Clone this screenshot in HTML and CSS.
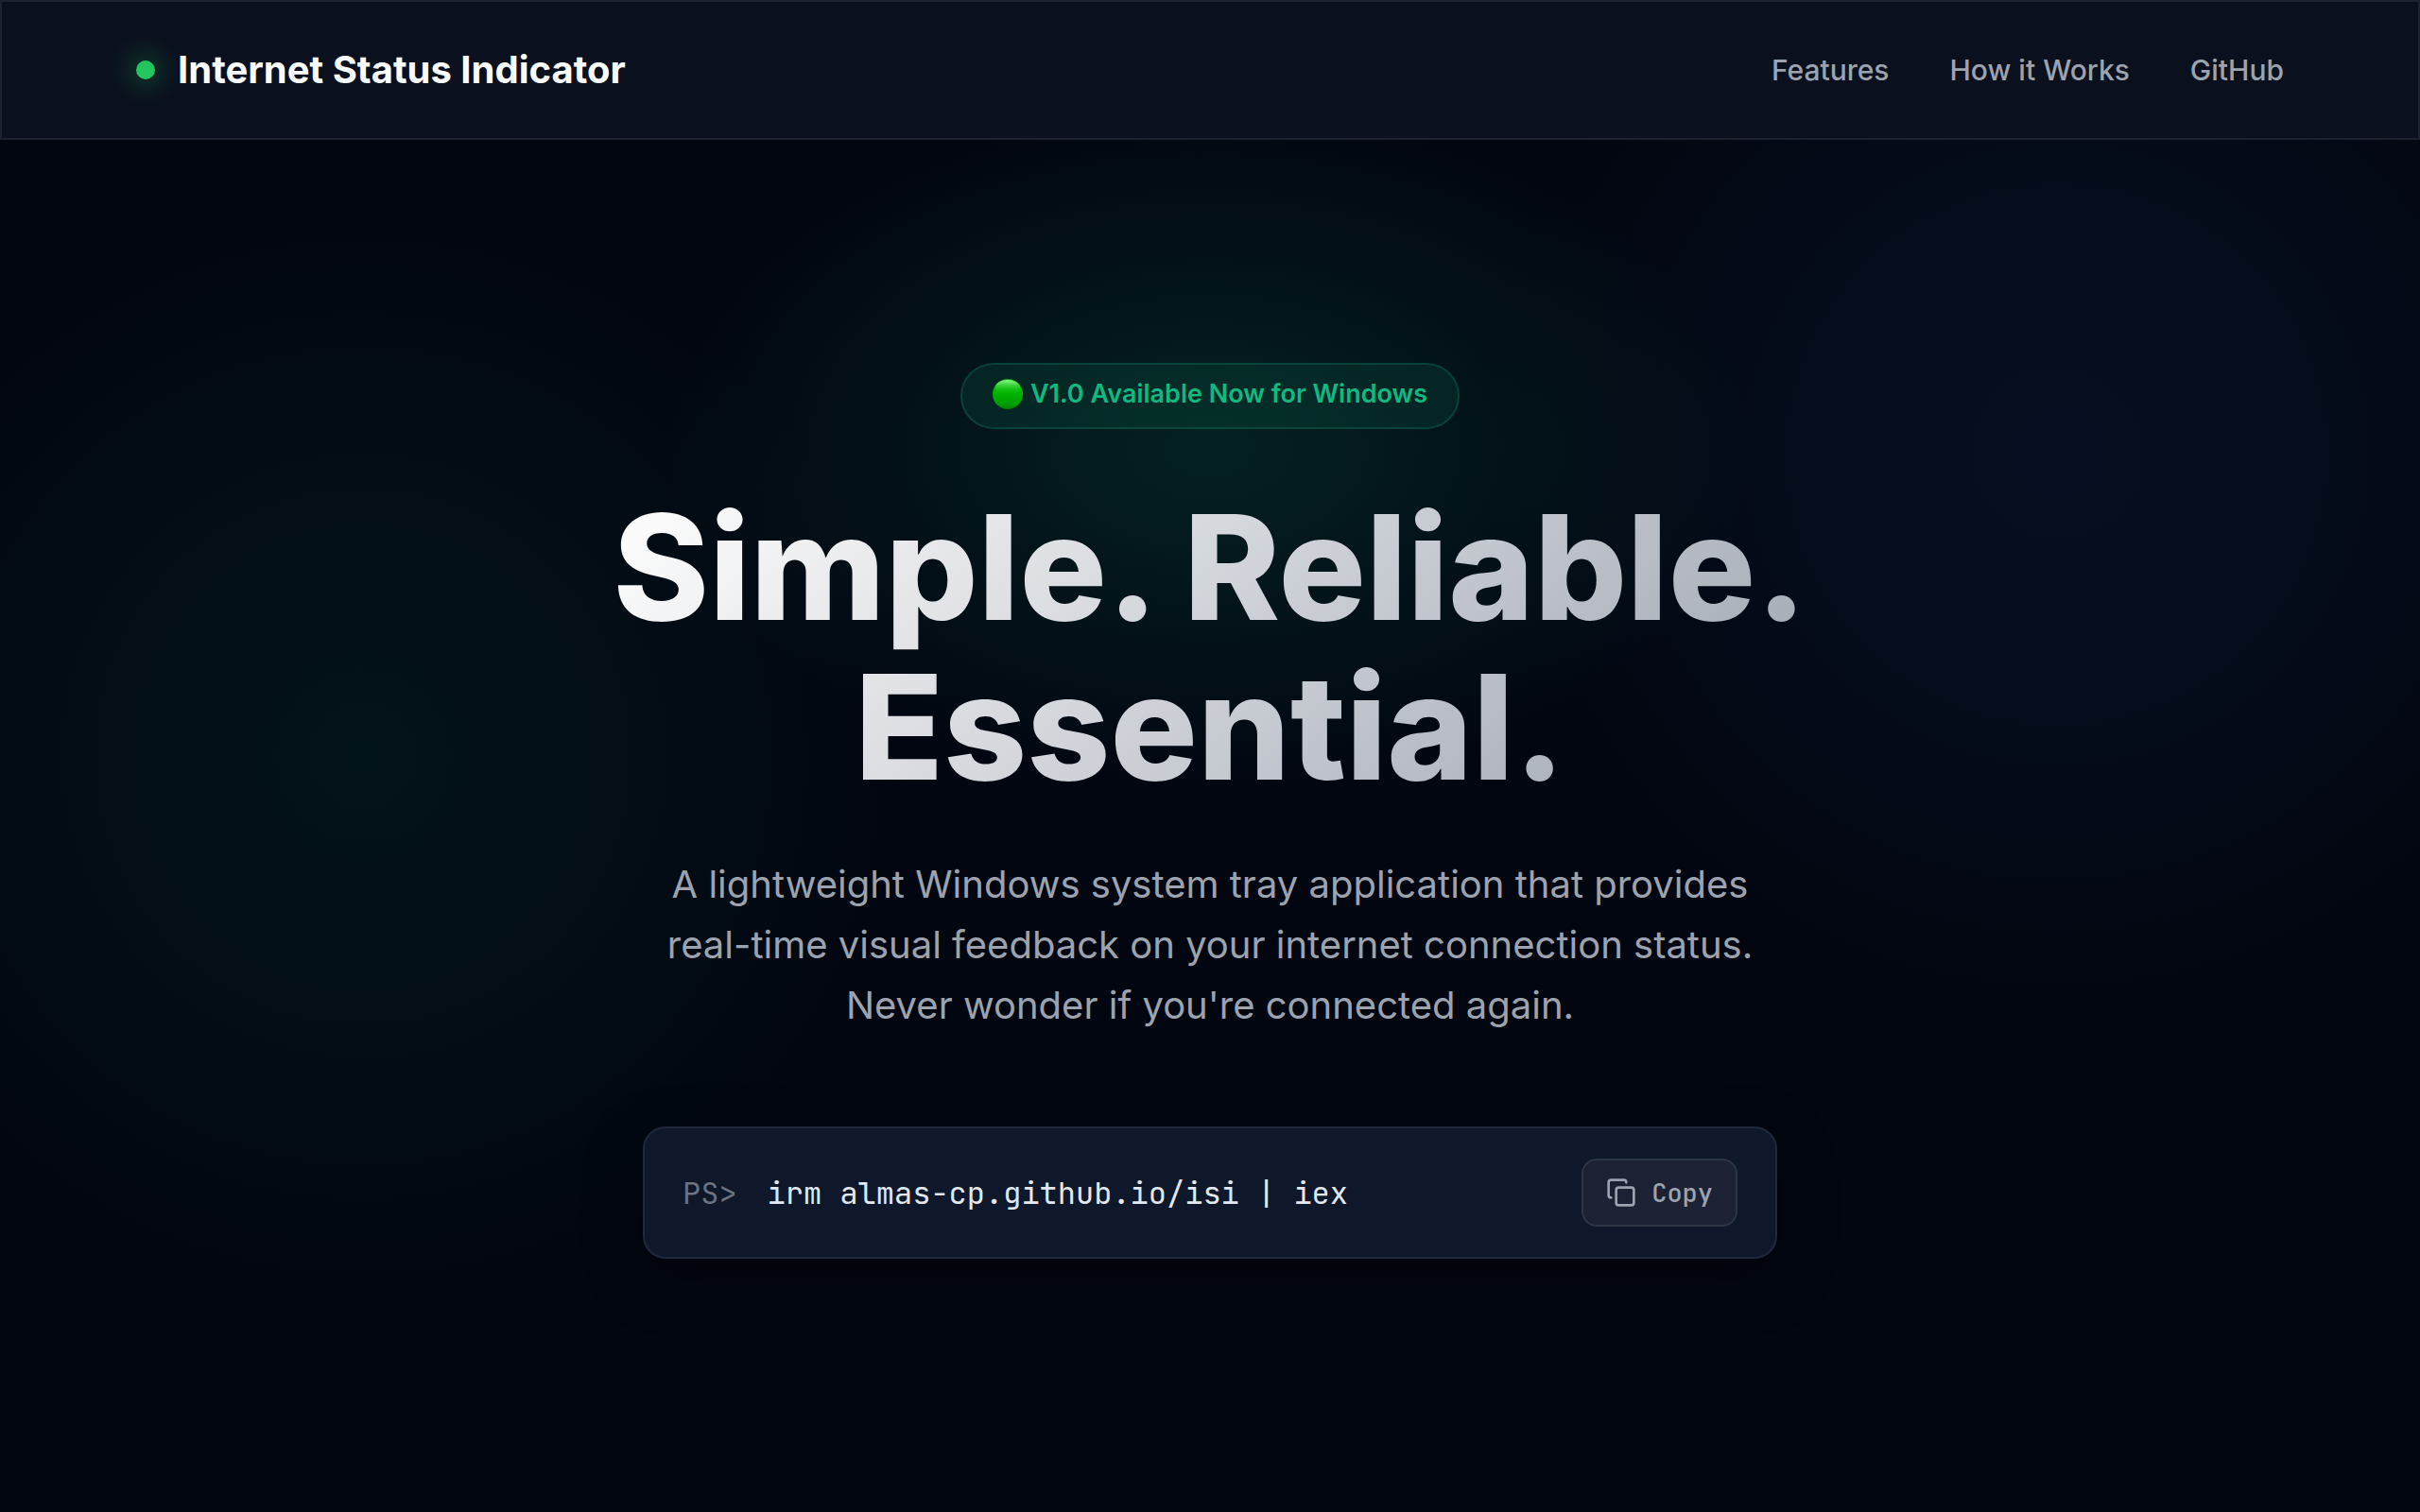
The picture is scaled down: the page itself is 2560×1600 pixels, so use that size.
FILE: index.html
```html
<!DOCTYPE html>
<html lang="en">
<head>
  <meta charset="UTF-8" />
  <meta name="viewport" content="width=device-width, initial-scale=1.0" />
  <title>Internet Status Indicator</title>
  <link rel="stylesheet" href="styles.css">
</head>
<body>
  <header class="site-header">
    <div class="header-inner">
      <div class="logo">
        <span class="status-dot"></span>
        Internet Status Indicator
      </div>
      <nav class="nav-links">
        <a href="#features">Features</a>
        <a href="#how-it-works">How it Works</a>
        <a href="#github">GitHub</a>
      </nav>
    </div>
  </header>

  <main class="hero">
    <div class="badge">
      <svg class="badge-icon" viewBox="0 0 32 32" aria-hidden="true">
        <defs>
          <linearGradient id="ball" x1="0" y1="0" x2="0" y2="1">
            <stop offset="0" stop-color="#0aa80a"></stop>
            <stop offset="0.4" stop-color="#00b800"></stop>
            <stop offset="0.85" stop-color="#009c00"></stop>
            <stop offset="1" stop-color="#008000"></stop>
          </linearGradient>
          <linearGradient id="gloss" x1="0" y1="0" x2="0" y2="1">
            <stop offset="0" stop-color="#8cff8c"></stop>
            <stop offset="1" stop-color="#00b800" stop-opacity="0"></stop>
          </linearGradient>
        </defs>
        <circle cx="16" cy="16" r="16" fill="url(#ball)"></circle>
        <ellipse cx="16" cy="9" rx="13" ry="8" fill="url(#gloss)"></ellipse>
      </svg>
      V1.0 Available Now for Windows
    </div>
    <h1>Simple. Reliable.<br>Essential.</h1>
    <p class="subtitle">A lightweight Windows system tray application that provides real-time visual feedback on your internet connection status. Never wonder if you're connected again.</p>

    <!-- Install command -->
    <div class="terminal">
      <span class="prompt">PS&gt;</span>
      <code id="command" class="command">irm almas-cp.github.io/isi | iex</code>
      <button id="copyBtn" class="copy-btn" type="button">
        <svg class="copy-icon" viewBox="0 0 24 24" fill="none" stroke="currentColor" stroke-width="2" stroke-linecap="round" stroke-linejoin="round" aria-hidden="true">
          <rect x="8" y="8" width="14" height="14" rx="2" ry="2"></rect>
          <path d="M4 16c-1.1 0-2-.9-2-2V4c0-1.1.9-2 2-2h10c1.1 0 2 .9 2 2"></path>
        </svg>
        <span id="copyLabel">Copy</span>
      </button>
    </div>
  </main>

  <script>
    const copyLabel = document.getElementById("copyLabel");

    document.getElementById("copyBtn").addEventListener("click", async () => {
      await navigator.clipboard.writeText(document.getElementById("command").innerText);
      copyLabel.innerText = "Copied!";
      setTimeout(() => {
        copyLabel.innerText = "Copy";
      }, 2000);
    });
  </script>
</body>
</html>
```
FILE: styles.css
```css
* {
  box-sizing: border-box;
  margin: 0;
  padding: 0;
}

body {
  min-height: 100vh;
  display: flex;
  flex-direction: column;
  font-family: Inter, sans-serif;
  color: #f9fafb;
  background-color: #020610;
  background-image:
    radial-gradient(circle at 15% 50%, rgba(16, 185, 129, 0.08), transparent 25%),
    radial-gradient(circle at 85% 30%, rgba(59, 130, 246, 0.08), transparent 25%),
    radial-gradient(580px 360px at 50% 476px, rgba(16, 185, 129, 0.15), transparent);
}

.site-header {
  background: #0b101e;
  border: 2px solid #1e2230;
}

.header-inner {
  max-width: 2400px;
  min-height: 144px;
  margin: 0 auto;
  padding: 0 64px;
  display: flex;
  align-items: center;
  justify-content: space-between;
}

.logo {
  display: flex;
  align-items: center;
  gap: 24px;
  font-size: 40px;
  font-weight: 700;
  line-height: 64px;
}

.status-dot {
  width: 20px;
  height: 20px;
  border-radius: 50%;
  background: #22c55e;
  box-shadow: 0 0 30px rgba(34, 197, 94, 0.8);
}

.nav-links {
  display: flex;
  gap: 64px;
}

.nav-links a {
  color: #9ca3af;
  font-size: 30px;
  font-weight: 500;
  line-height: 48px;
  text-decoration: none;
}

.nav-links a:hover {
  color: #f9fafb;
}

.hero {
  flex: 1;
  display: flex;
  flex-direction: column;
  align-items: center;
  padding: 236px 64px 64px;
  text-align: center;
}

.badge {
  display: flex;
  align-items: center;
  gap: 8px;
  margin-bottom: 62px;
  padding: 14px 32px 18px;
  border: 2px solid rgba(16, 185, 129, 0.2);
  border-radius: 40px;
  background: rgba(16, 185, 129, 0.1);
  color: #10b981;
  font-size: 27px;
  font-weight: 600;
  line-height: 34px;
}

.badge-icon {
  width: 32px;
  height: 32px;
}

h1 {
  margin-bottom: 50px;
  font-size: 154px;
  font-weight: 800;
  line-height: 169px;
  background: linear-gradient(135deg, #ffffff 0%, #9ca3af 100%);
  background-clip: text;
  -webkit-background-clip: text;
  color: transparent;
}

.subtitle {
  max-width: 1200px;
  margin-bottom: 96px;
  color: #9ca3af;
  font-size: 40px;
  line-height: 64px;
}

.terminal {
  width: 100%;
  max-width: 1200px;
  display: flex;
  align-items: center;
  gap: 32px;
  padding: 32px 40px;
  border: 2px solid #1e293b;
  border-radius: 24px;
  background: #0f172a;
  box-shadow: 0 20px 60px rgba(0, 0, 0, 0.4);
  font-family: "JetBrains Mono", "Liberation Mono", monospace;
  font-size: 32px;
  text-align: left;
}

.prompt {
  color: #6b7280;
}

.command {
  flex: 1;
  color: #e2e8f0;
  font-family: inherit;
}

.copy-btn {
  display: flex;
  align-items: center;
  gap: 16px;
  padding: 16px 24px;
  border: 2px solid #2e3544;
  border-radius: 16px;
  background: #1c2133;
  color: #9ca3af;
  font-family: inherit;
  font-size: 27px;
  font-weight: 500;
  line-height: 36px;
  cursor: pointer;
}

.copy-btn:hover {
  color: #f9fafb;
}

.copy-icon {
  width: 32px;
  height: 32px;
}
```
